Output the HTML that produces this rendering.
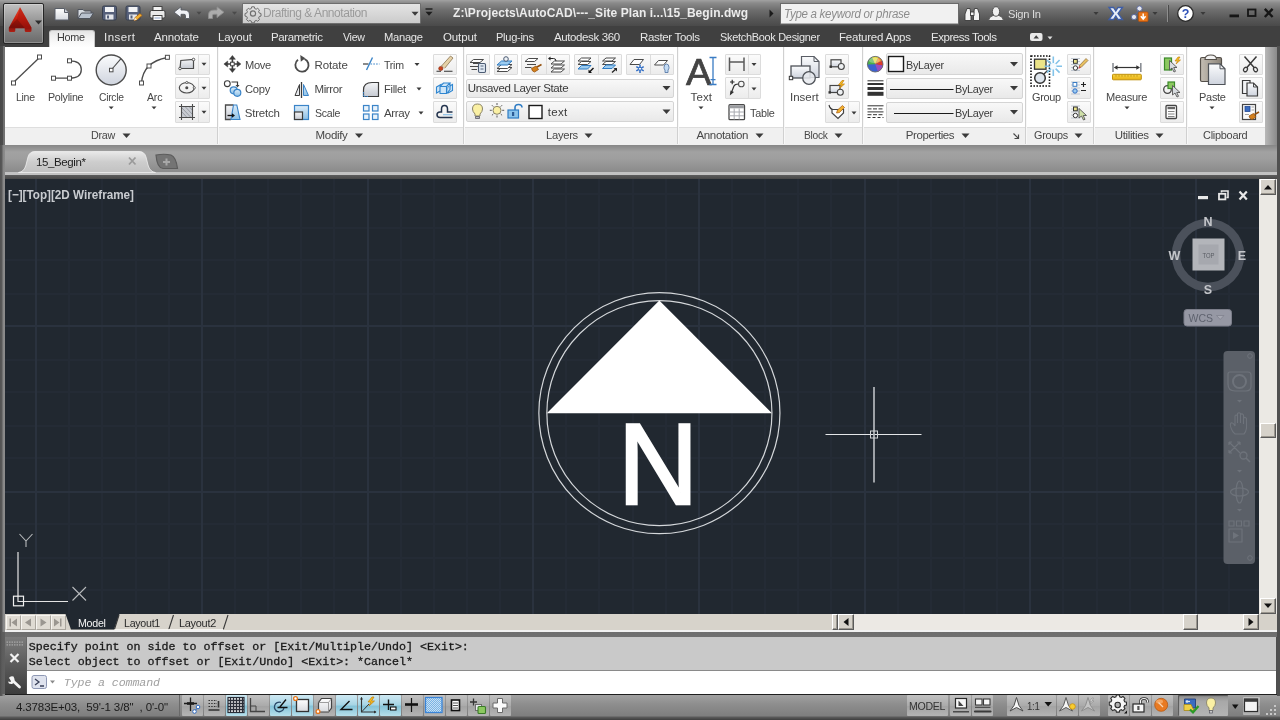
<!DOCTYPE html>
<html>
<head>
<meta charset="utf-8">
<title>AutoCAD</title>
<style>
*{box-sizing:border-box;margin:0;padding:0}
html,body{width:1280px;height:720px;overflow:hidden;background:#4e4e4e;font-family:"Liberation Sans",sans-serif;font-size:11px;color:#3c3c3c}
.a{position:absolute}
svg{position:absolute;overflow:visible}
#titlebar{left:0;top:0;width:1280px;height:27px;background:linear-gradient(#a2a2a2 0,#8a8a8a 3px,#6e6e6e 10px,#555 20px,#484848 27px)}
#tabrow{left:0;top:26px;width:1280px;height:21px;background:#404040}
#ribbon{left:4.5px;top:46.5px;width:1260.5px;height:81.5px;background:#fff}
#ribtitle{left:4.5px;top:127px;width:1260.5px;height:18px;background:#f0f0f0;border-top:1px solid #dedede}
#ribright{left:1265px;top:47px;width:12px;height:98px;background:linear-gradient(90deg,#b8b8b8,#8a8a8a)}
#docbar{left:0;top:145px;width:1280px;height:34px;background:linear-gradient(#868686 0,#a2a2a2 7px,#9e9e9e 14px,#8a8a8a 27px,#c2c2c2 27.5px,#c2c2c2 29.5px,#5a5a5a 30.5px,#484848 34px)}
#lborder{left:0;top:46px;width:5px;height:650px;background:linear-gradient(90deg,#525252 0,#5a5a5a 2px,#868686 3px,#8c8c8c 5px)}
#lborder3{left:0;top:632px;width:5px;height:62px;background:linear-gradient(90deg,#4e4e4e 0,#5c5c5c 2px,#606060 5px)}
#lborder2{left:0;top:46px;width:5px;height:99px;background:linear-gradient(90deg,#484848 0,#4c4c4c 2.5px,#6e6e6e 3px,#727272 5px)}
#rborder{left:1277px;top:46px;width:3px;height:650px;background:#505050}
#canvas{left:5px;top:179px;width:1254px;height:435px;background:#212830;overflow:hidden}
#vscroll{left:1259px;top:179px;width:18px;height:435px;background:#ebe9e4}
#hrow{left:5px;top:614px;width:1272px;height:16px;background:#d7d3cb}
#hscroll{left:837px;top:614px;width:422px;height:16px;background:#ece9e4}
#undertab{left:0;top:630px;width:1280px;height:7px;background:linear-gradient(#f2f2f2 0,#f2f2f2 2px,#6e6e6e 2px,#707070 7px)}
#cmdleft{left:5px;top:637px;width:22px;height:57px;background:#5c5c5c}
#cmdhist{left:27px;top:637px;width:1249px;height:34px;background:#c9c9c9;border-bottom:1px solid #8a8a8a}
#cmdin{left:27px;top:671px;width:1249px;height:23px;background:#fff}
#status{left:0;top:694px;width:1280px;height:26px;background:linear-gradient(#181818 0,#262626 1px,#a0a0a0 1.5px,#8e8e8e 10px,#7e7e7e 22px,#5c5c5c 23px,#3e3e3e 26px)}
.tab{top:30px;height:16px;color:#e4e4e4;font-size:11.5px;line-height:15px;white-space:nowrap}
.lbl{white-space:nowrap;font-size:11.5px;line-height:13px;color:#474747}
.pt{top:129px;height:14px;line-height:13px;font-size:11.5px;color:#474747;white-space:nowrap}
.mono{font-family:"Liberation Mono",monospace;font-size:11.67px;white-space:pre;color:#1c1c1c;line-height:15px}
.sep{top:47px;width:2px;height:97px;background:linear-gradient(90deg,#d0d0d0 0,#d0d0d0 1px,#f8f8f8 1px)}
.sb{height:21px;border:1px solid #dcdcdc;background:linear-gradient(#fbfbfb,#ececec);border-radius:1px}
.sbd{width:1px;background:#dcdcdc}
.dd{border:1px solid #d4d4d4;background:linear-gradient(#f8f8f8,#e9e9e9);border-radius:2px}
.tri{width:0;height:0;border-left:3.5px solid transparent;border-right:3.5px solid transparent;border-top:4px solid #3a3a3a}
.tris{width:0;height:0;border-left:3px solid transparent;border-right:3px solid transparent;border-top:3px solid #3a3a3a}
.stb{top:695px;width:21px;height:21px;background:linear-gradient(#c2c2c2,#ababab 50%,#a2a2a2 51%,#b4b4b4);border-radius:1px}
.stb.on{background:linear-gradient(#cfe9f3,#a9d6e6 45%,#86c4d9 55%,#b7dfea)}
.cb{background:#d6d2ca;border:1px solid;border-color:#fff #5a5a5a #5a5a5a #fff;box-shadow:inset -1px -1px 0 #9a968e}
.tx{white-space:pre;line-height:16px;height:16px}
#root{position:absolute;left:0;top:0;width:1280px;height:720px;will-change:transform;overflow:hidden}
</style>
</head>
<body>
<div id="root">
<div id="titlebar" class="a"></div>
<div id="tabrow" class="a"></div>
<div id="ribbon" class="a"></div>
<div id="ribtitle" class="a"></div>
<div id="ribright" class="a"></div>
<div id="docbar" class="a"></div>
<div id="canvas" class="a">
<svg width="1254" height="435" viewBox="5 179 1254 435" style="left:0;top:0">
<path d="M69 179V614M102 179V614M136 179V614M169 179V614M235 179V614M268 179V614M301 179V614M334 179V614M401 179V614M434 179V614M467 179V614M500 179V614M566 179V614M599 179V614M633 179V614M666 179V614M732 179V614M765 179V614M798 179V614M831 179V614M898 179V614M931 179V614M964 179V614M997 179V614M1063 179V614M1097 179V614M1130 179V614M1163 179V614M1229 179V614M5 194H1259M5 228H1259M5 260H1259M5 294H1259M5 360H1259M5 392H1259M5 426H1259M5 458H1259M5 524H1259M5 558H1259M5 590H1259" stroke="#242b35" stroke-width="2" fill="none"/>
<path d="M36 179V614M202 179V614M368 179V614M533 179V614M699 179V614M865 179V614M1030 179V614M1196 179V614M5 326H1259M5 492H1259" stroke="#2a323e" stroke-width="2" fill="none"/>
<circle cx="659.4" cy="413.1" r="120.55" fill="none" stroke="#d4d7da" stroke-width="1.2"/>
<circle cx="659.4" cy="413.1" r="112.55" fill="none" stroke="#d4d7da" stroke-width="1.2"/>
<path d="M546.8 413.2L659.3 300.6L772 413.2Z" fill="#fff"/>
<text transform="translate(658.1 504.9) scale(1 1.036)" x="0" y="-1.3" font-family="Liberation Sans, sans-serif" font-size="111" fill="#fff" stroke="#fff" stroke-width="2.6" text-anchor="middle">N</text>
<path d="M825.5 434.5H921.5" stroke="#e4e6e8" stroke-width="1.1"/><path d="M874 387V482.5" stroke="#b4b8bc" stroke-width="1.7"/>
<rect x="870.5" y="431" width="7" height="7" fill="none" stroke="#d0d3d6" stroke-width="1"/>
<path d="M18 552V601.5H68" stroke="#e4e4e4" stroke-width="1.2" fill="none"/>
<rect x="13.5" y="596.2" width="10" height="9.6" fill="none" stroke="#f0f0f0" stroke-width="1.2"/>
<path d="M19.5 534L26 541L32.5 534M26 541V547" stroke="#b8babc" stroke-width="1.1" fill="none"/>
<path d="M72.5 587L86 600.5M86 587L72.5 600.5" stroke="#b8babc" stroke-width="1.1" fill="none"/>
<text x="8" y="198.8" font-family="Liberation Sans, sans-serif" font-size="12.5" font-weight="bold" fill="#c9ccd0" textLength="126" lengthAdjust="spacingAndGlyphs">[−][Top][2D Wireframe]</text>
<rect x="1198" y="196" width="10" height="3.2" fill="#e8e8e8"/>
<path d="M1221.5 192.5V191H1228V197.5H1226.5" stroke="#e8e8e8" stroke-width="1.6" fill="none"/>
<rect x="1219" y="193.8" width="6.4" height="5.6" fill="none" stroke="#e8e8e8" stroke-width="1.8"/>
<path d="M1239.5 191.5L1246.8 199.5M1246.8 191.5L1239.5 199.5" stroke="#e8e8e8" stroke-width="2.2" fill="none"/>
<circle cx="1208" cy="255" r="32" fill="none" stroke="#4b515b" stroke-width="8.5"/>
<rect x="1192.5" y="238.5" width="32" height="32" fill="#b3b5ba"/>
<rect x="1198.5" y="244.5" width="20" height="20" fill="#a6a8ae"/>
<text x="1208.5" y="258" font-family="Liberation Sans, sans-serif" font-size="7.5" fill="#5a5d64" text-anchor="middle" textLength="12" lengthAdjust="spacingAndGlyphs">TOP</text>
<text x="1208" y="225.5" font-family="Liberation Sans, sans-serif" font-size="12.5" font-weight="bold" fill="#c4c6ca" text-anchor="middle">N</text>
<text x="1208" y="293.5" font-family="Liberation Sans, sans-serif" font-size="12.5" font-weight="bold" fill="#c4c6ca" text-anchor="middle">S</text>
<text x="1174.5" y="259.5" font-family="Liberation Sans, sans-serif" font-size="12.5" font-weight="bold" fill="#c4c6ca" text-anchor="middle">W</text>
<text x="1242" y="259.5" font-family="Liberation Sans, sans-serif" font-size="12.5" font-weight="bold" fill="#c4c6ca" text-anchor="middle">E</text>
<rect x="1184" y="309.5" width="47.5" height="16.5" rx="3" fill="#9698a4" stroke="#7c7e8a" stroke-width="1"/>
<text x="1188.5" y="321.5" font-family="Liberation Sans, sans-serif" font-size="10.5" fill="#5e626e">WCS</text>
<path d="M1216.5 315.5H1224L1220.2 319.5Z" fill="#a6a8b2" stroke="#80828e" stroke-width="0.8"/>
<rect x="1223.5" y="351" width="31.5" height="213" rx="4" fill="#5b6068"/>
<circle cx="1250" cy="356" r="2.3" fill="none" stroke="#6e737b" stroke-width="1"/>
<circle cx="1250" cy="558" r="2.3" fill="none" stroke="#6e737b" stroke-width="1"/>
<path d="M1230 372H1248Q1251 372 1251 375V386Q1251 391 1246 391H1235Q1228 391 1228 384V374Q1228 372 1230 372Z" fill="none" stroke="#6e737b" stroke-width="1.2"/>
<circle cx="1239.5" cy="381.5" r="6.5" fill="none" stroke="#6e737b" stroke-width="2"/>
<path d="M1237 400H1242L1239.5 402.5Z" fill="#6e737b"/>
<path d="M1233 432Q1229 425 1231 423Q1233 422 1235 426V416Q1236 414 1237.5 416V423V413.5Q1239 412 1240.5 413.5V423V414.5Q1242 413 1243.5 415V424V418Q1245 416.5 1246.5 418.5V428Q1246 432 1244 434H1235Z" fill="none" stroke="#6e737b" stroke-width="1.1"/>
<path d="M1229 442L1240 453M1240 442L1229 453M1229 442H1232M1229 442V445M1240 442H1237M1240 442V445M1229 453H1232M1229 453V450" fill="none" stroke="#6e737b" stroke-width="1.2"/>
<circle cx="1243.5" cy="455.5" r="3.5" fill="none" stroke="#6e737b" stroke-width="1.3"/>
<path d="M1246 458L1250 462" stroke="#6e737b" stroke-width="1.6"/>
<path d="M1237 470H1242L1239.5 472.5Z" fill="#6e737b"/>
<ellipse cx="1239.5" cy="492" rx="9" ry="4" fill="none" stroke="#6e737b" stroke-width="1.2"/>
<ellipse cx="1239.5" cy="492" rx="3.5" ry="11" fill="none" stroke="#6e737b" stroke-width="1.2"/>
<path d="M1237 509H1242L1239.5 511.5Z" fill="#6e737b"/>
<path d="M1229 521H1234V526H1229ZM1236.5 521H1241.5V526H1236.5ZM1244 521H1249V526H1244ZM1229 529H1242V542H1229Z" fill="none" stroke="#6e737b" stroke-width="1.1"/>
<path d="M1233 532V539L1239 535.5Z" fill="#6e737b"/>
</svg>
</div>
<div id="vscroll" class="a"></div>
<div id="hrow" class="a"></div>
<div id="hscroll" class="a"></div>
<div id="undertab" class="a"></div>
<div id="cmdleft" class="a"></div>
<div id="cmdhist" class="a"></div>
<div id="cmdin" class="a"></div>
<div id="status" class="a"></div>
<div id="lborder" class="a"></div>
<div id="lborder2" class="a"></div>
<div id="lborder3" class="a"></div>
<div id="rborder" class="a"></div>
<!-- app button -->
<div class="a" style="left:3px;top:3px;width:41px;height:41px;border:1px solid #262626;border-radius:2px;background:linear-gradient(#c2c2c2 0,#a4a4a4 30%,#848484 65%,#6a6a6a 100%);box-shadow:inset 0 0 0 1px rgba(255,255,255,.25)"></div>
<svg width="1280" height="47" viewBox="0 0 1280 47" style="left:0;top:0">
<defs>
<linearGradient id="gA" x1="0" y1="0" x2="0" y2="1"><stop offset="0" stop-color="#ea4a30"/><stop offset=".45" stop-color="#c8200f"/><stop offset=".8" stop-color="#86100a"/><stop offset="1" stop-color="#b02014"/></linearGradient>
<linearGradient id="gPg" x1="0" y1="0" x2="0" y2="1"><stop offset="0" stop-color="#ffffff"/><stop offset="1" stop-color="#d4d8de"/></linearGradient>
</defs>
<!-- A logo -->
<path d="M20 7.200L8.800 27.800V30.500Q8.800 32 10.300 32H13.800Q15.300 32 15.300 30.500V28.300H24.700V30.500Q24.700 32 26.200 32H30Q31.500 32 31.500 30.500V27.800Z" fill="url(#gA)"/>
<path d="M20 7.200L31.500 27.800L24.700 28.300L17 19Z" fill="#a8140c" opacity=".5"/>
<path d="M8.800 27.800L17 19L24.700 28.300H15.300Z" fill="#6a0c06" opacity=".45"/>
<path d="M35 20.5H42L38.5 24.5Z" fill="#2e2e2e"/>
<!-- new -->
<path d="M55 8.5H64.5L68.5 12.5V20H55Z" fill="url(#gPg)" stroke="#5a5f68" stroke-width="1"/>
<path d="M64.5 8.5V12.5H68.5" fill="#c8ccd4" stroke="#5a5f68" stroke-width="1"/>
<!-- open -->
<path d="M78 18.5V9.5H83L84.5 11H91V13" fill="#d8dce2" stroke="#4e535c" stroke-width="1"/>
<path d="M78 18.5L81.5 13H93.5L90 18.5Z" fill="#b9c2ce" stroke="#4e535c" stroke-width="1"/>
<!-- save -->
<rect x="102.5" y="6" width="14" height="14" rx="1.5" fill="#56607a" stroke="#39404f" stroke-width="1"/>
<rect x="105" y="7" width="9" height="5" fill="#f2f3f5"/>
<rect x="105.5" y="14.5" width="8" height="5" fill="#e4e6ea"/><rect x="107" y="15.5" width="2" height="3" fill="#56607a"/>
<!-- saveas -->
<rect x="126" y="6" width="14" height="14" rx="1.5" fill="#56607a" stroke="#39404f" stroke-width="1"/>
<rect x="128.500" y="7" width="9" height="5" fill="#f2f3f5"/>
<rect x="129" y="14.5" width="8" height="5" fill="#e4e6ea"/><rect x="130.5" y="15.5" width="2" height="3" fill="#56607a"/>
<path d="M134 20.5L135 17.5L140 13.5L142 15.5L137 19.8Z" fill="#f0b030" stroke="#a85a10" stroke-width=".7"/>
<path d="M134 20.5L135 17.5L137 19.8Z" fill="#f6e6c8"/>
<!-- print -->
<rect x="153" y="6.500" width="9" height="5" fill="#f4f4f4" stroke="#444" stroke-width="1"/>
<rect x="150" y="10.500" width="15" height="7.500" rx="1.5" fill="#e9e9e9" stroke="#3e3e3e" stroke-width="1"/>
<rect x="153" y="15.500" width="9" height="5" fill="#fafafa" stroke="#444" stroke-width="1"/>
<path d="M154.500 18H160.500" stroke="#8aa0c8" stroke-width="1"/>
<!-- undo -->
<path d="M174 12.200L181 6.800V10H184Q189.500 10 189.500 15V18.500H185.500V15.500Q185.500 14.300 184 14.300H181V17.600Z" fill="#f0f2f6" stroke="#565a62" stroke-width=".9"/>
<path d="M196.500 11.800H201.500L199 14.800Z" fill="#4a4a4a"/>
<!-- redo -->
<path d="M224 12.200L217 6.800V10H214Q208.500 10 208.500 15V18.500H212.500V15.500Q212.500 14.300 214 14.300H217V17.600Z" fill="#adadad" stroke="#8c8c8c" stroke-width=".9"/>
<path d="M232 11.800H237L234.500 14.800Z" fill="#4a4a4a"/>
</svg>
<!-- workspace combo -->
<div class="a" style="left:242px;top:3px;width:179px;height:21px;border:1px solid #6e6e6e;background:linear-gradient(#e4e4e4,#cbcbcb);border-radius:1px"></div>
<svg width="200" height="27" viewBox="242 0 200 27" style="left:242px;top:0">
<g fill="none" stroke="#6e6e6e" stroke-width="1.2">
<circle cx="253" cy="13.500" r="2.600"/>
<path d="M251.700 6.800h2.600l.4 1.700 1.500.7 1.500-.9 1.800 1.800-.9 1.500.7 1.500 1.700.4v2.600l-1.700.4-.7 1.500.9 1.500-1.800 1.800-1.500-.9-1.500.7-.4 1.700h-2.600l-.4-1.700-1.500-.7-1.500.9-1.800-1.800.9-1.500-.7-1.500-1.700-.4v-2.600l1.700-.4.700-1.500-.9-1.500 1.800-1.800 1.500.9 1.500-.7z" stroke-width="1"/>
</g>
<path d="M411.500 11.800H418.500L415 15.800Z" fill="#3c3c3c"/>
<path d="M425.500 9H432.500" stroke="#1c1c1c" stroke-width="1.400"/>
<path d="M425.500 11.800H432.500L429 15.800Z" fill="#1c1c1c"/>
</svg>
<!-- title right arrow -->
<svg width="520" height="27" viewBox="760 0 520 27" style="left:760px;top:0">
<path d="M769.500 9.500V17.500L773.500 13.500Z" fill="#1a1a1a"/>
<rect x="780.500" y="3.500" width="178" height="20.500" fill="#f1f1f1" stroke="#6a6a6a" stroke-width="1"/>
<!-- binoculars -->
<g fill="#f2f2f2" stroke="#3c3c3c" stroke-width=".9">
<path d="M965 20.500V14L967 8.500H970L971 14V20.500Z"/>
<path d="M973.500 20.500V14L974.500 8.500H977.500L979.500 14V20.500Z"/>
<rect x="970.500" y="12" width="3.500" height="3.500"/>
</g>
<!-- user -->
<g fill="#f0f0f0" stroke="#4a4a4a" stroke-width=".9">
<path d="M988.500 20.500Q989 16.500 993 15.500H999Q1003 16.500 1003.500 20.500Z"/>
<ellipse cx="996" cy="11.500" rx="3.600" ry="4.800"/>
</g>
<path d="M1093.500 12H1098.500L1096 15Z" fill="#3a3a3a"/>
<!-- exchange X -->
<path d="M1109 7.500H1113.500L1115.800 11L1118 7.500H1122.500L1118 13.500L1122.500 19.500H1118L1115.800 16L1113.500 19.500H1109L1113.500 13.500Z" fill="#e8eef8" stroke="#3d5da8" stroke-width="1.300"/>
<!-- a360 -->
<g fill="#e6e8f0" stroke="#5a6aa0" stroke-width=".9">
<circle cx="1139.500" cy="8.500" r="2.600"/><circle cx="1134" cy="17" r="2.600"/>
<path d="M1138.500 10.500L1135 15" />
</g>
<rect x="1138.500" y="12" width="9.500" height="9.500" rx="1" fill="#e8761a" stroke="#b8520c" stroke-width=".8"/>
<path d="M1143.200 13.500V18M1140.800 16.300L1143.200 19L1145.600 16.300" stroke="#fff" stroke-width="1.500" fill="none"/>
<path d="M1152.500 12H1157.500L1155 15Z" fill="#3a3a3a"/>
<path d="M1167.500 5V22" stroke="#8e8e8e" stroke-width="1"/><path d="M1168.500 5V22" stroke="#4a4a4a" stroke-width="1"/>
<!-- help -->
<circle cx="1185.500" cy="13.500" r="7.800" fill="#fff" stroke="#2a2a2a" stroke-width="1.300"/>
<text x="1185.500" y="18" font-family="Liberation Sans, sans-serif" font-size="12.500" font-weight="bold" fill="#2c50b8" text-anchor="middle">?</text>
<path d="M1200.500 12H1205.500L1203 15Z" fill="#3a3a3a"/>
<!-- window controls -->
<rect x="1229.500" y="14.500" width="9.500" height="2.800" fill="#161616"/>
<rect x="1248" y="9.500" width="7.500" height="6.500" fill="none" stroke="#161616" stroke-width="1.800"/>
<path d="M1264.800 8.800L1272.600 17M1272.600 8.800L1264.800 17" stroke="#161616" stroke-width="2.400"/>
</svg>

<div class="a" style="left:49px;top:30px;width:45.500px;height:17px;border-radius:3px 3px 0 0;background:linear-gradient(#e4e4e4 0,#f0f0f0 5px,#fafafa 12px,#fff 17px);border:1px solid #c8c8c8;border-bottom:0"></div>
<svg width="40" height="20" viewBox="1025 26 40 20" style="left:1025px;top:26px">
<rect x="1030" y="33" width="12.500" height="8" rx="2" fill="#e8e8e8"/>
<path d="M1033.500 38.500H1039L1036.200 35.200Z" fill="#404040"/>
<path d="M1047.500 36.500H1052.500L1050 39.500Z" fill="#e0e0e0"/>
</svg>

<div class="a sep" style="left:217px"></div>
<div class="a sep" style="left:462.5px"></div>
<div class="a sep" style="left:676.5px"></div>
<div class="a sep" style="left:782.5px"></div>
<div class="a sep" style="left:862px"></div>
<div class="a sep" style="left:1025px"></div>
<div class="a sep" style="left:1092.5px"></div>
<div class="a sep" style="left:1185.5px"></div>
<div class="a sb" style="left:174.5px;top:53.5px;width:35.5px;height:21.5px"></div>
<div class="a sbd" style="left:197.5px;top:54.5px;height:19.5px"></div>
<div class="a sb" style="left:174.5px;top:77.3px;width:35.5px;height:21.5px"></div>
<div class="a sbd" style="left:197.5px;top:78.3px;height:19.5px"></div>
<div class="a sb" style="left:174.5px;top:101.2px;width:35.5px;height:21.5px"></div>
<div class="a sbd" style="left:197.5px;top:102.2px;height:19.5px"></div>
<div class="a sb" style="left:433px;top:53.5px;width:23.5px;height:21.5px"></div>
<div class="a sb" style="left:433px;top:77.3px;width:23.5px;height:21.5px"></div>
<div class="a sb" style="left:433px;top:101.2px;width:23.5px;height:21.5px"></div>
<div class="a sb" style="left:466px;top:53.5px;width:24.0px;height:21.5px"></div>
<div class="a sb" style="left:493.5px;top:53.5px;width:24.0px;height:21.5px"></div>
<div class="a sb" style="left:521px;top:53.5px;width:48.5px;height:21.5px"></div>
<div class="a sbd" style="left:545.5px;top:54.5px;height:19.5px"></div>
<div class="a sb" style="left:573.5px;top:53.5px;width:48.0px;height:21.5px"></div>
<div class="a sbd" style="left:597.5px;top:54.5px;height:19.5px"></div>
<div class="a sb" style="left:625.5px;top:53.5px;width:48.0px;height:21.5px"></div>
<div class="a sbd" style="left:649.5px;top:54.5px;height:19.5px"></div>
<div class="a dd" style="left:465.5px;top:78.500px;width:208.500px;height:19px"></div>
<div class="a dd" style="left:465.5px;top:100.700px;width:208.500px;height:21px"></div>
<div class="a sb" style="left:724.5px;top:53.5px;width:36.0px;height:21.5px"></div>
<div class="a sbd" style="left:748px;top:54.5px;height:19.5px"></div>
<div class="a sb" style="left:724.5px;top:77.3px;width:36.0px;height:21.5px"></div>
<div class="a sbd" style="left:748px;top:78.3px;height:19.5px"></div>
<div class="a sb" style="left:824.5px;top:53.5px;width:24.0px;height:21.5px"></div>
<div class="a sb" style="left:824.5px;top:77.3px;width:24.0px;height:21.5px"></div>
<div class="a sb" style="left:824.5px;top:101.2px;width:35.5px;height:21.5px"></div>
<div class="a sbd" style="left:848px;top:102.2px;height:19.5px"></div>
<div class="a dd" style="left:886px;top:53.300px;width:137px;height:21.500px"></div>
<div class="a dd" style="left:886px;top:77.600px;width:137px;height:21.300px"></div>
<div class="a dd" style="left:886px;top:101.500px;width:137px;height:21px"></div>
<div class="a sb" style="left:1067px;top:53.5px;width:23.5px;height:21.5px"></div>
<div class="a sb" style="left:1067px;top:77.3px;width:23.5px;height:21.5px"></div>
<div class="a sb" style="left:1067px;top:101.2px;width:23.5px;height:21.5px"></div>
<div class="a sb" style="left:1159.5px;top:53.5px;width:24.0px;height:21.5px"></div>
<div class="a sb" style="left:1159.5px;top:77.3px;width:24.0px;height:21.5px"></div>
<div class="a sb" style="left:1159.5px;top:101.2px;width:24.0px;height:21.5px"></div>
<div class="a sb" style="left:1238.5px;top:53.5px;width:24.0px;height:21.5px"></div>
<div class="a sb" style="left:1238.5px;top:77.3px;width:24.0px;height:21.5px"></div>
<div class="a sb" style="left:1238.5px;top:101.2px;width:24.0px;height:21.5px"></div><svg width="1272" height="100" viewBox="5 47 1272 100" style="left:5px;top:47px">
<defs>
<linearGradient id="gC" x1="0" y1="0" x2="0" y2="1"><stop offset="0" stop-color="#fbfcfd"/><stop offset="1" stop-color="#cfd4de"/></linearGradient>
<linearGradient id="gB" x1="0" y1="0" x2="0" y2="1"><stop offset="0" stop-color="#dfeefa"/><stop offset="1" stop-color="#8cc0e6"/></linearGradient>
<linearGradient id="gG" x1="0" y1="0" x2="0" y2="1"><stop offset="0" stop-color="#f4f5f7"/><stop offset="1" stop-color="#c6cad2"/></linearGradient>
</defs>
<g id="draw" fill="none" stroke="#4c4c4c" stroke-width="1.300">
<!-- line -->
<path d="M14.500 81.500L38.500 58.500"/>
<rect x="11.500" y="81" width="4" height="4" fill="#fff" stroke-width="1"/><rect x="37.500" y="55" width="4" height="4" fill="#fff" stroke-width="1"/>
<!-- polyline -->
<path d="M53.500 78.200H69.500Q81.300 78.200 81.300 69.500Q81.300 60.800 69.500 60.800"/>
<rect x="51.500" y="76.200" width="4" height="4" fill="#fff" stroke-width="1"/><rect x="67.500" y="76.200" width="4" height="4" fill="#fff" stroke-width="1"/><rect x="67.500" y="58.800" width="4" height="4" fill="#fff" stroke-width="1"/>
<!-- circle -->
<circle cx="111.200" cy="70" r="15" fill="url(#gC)" stroke-width="1.400"/>
<path d="M111.200 70L121 58.700" stroke-width="1.100"/>
<rect x="109.500" y="68.300" width="3.500" height="3.500" fill="#fff" stroke-width="1"/>
<!-- arc -->
<path d="M141.500 83Q143 62 167.400 57.500"/>
<rect x="139.500" y="81" width="4" height="4" fill="#fff" stroke-width="1"/><rect x="147" y="64" width="4" height="4" fill="#fff" stroke-width="1"/><rect x="165.400" y="55.300" width="4" height="4" fill="#fff" stroke-width="1"/>
<!-- rectangle -->
<path d="M180 68.500L180.800 60.500L193.500 59.500V68.500Z" fill="url(#gG)" stroke-width="1.200"/>
<circle cx="180" cy="68.500" r="1.300" fill="#fff" stroke-width=".9"/><circle cx="193.500" cy="59.500" r="1.300" fill="#fff" stroke-width=".9"/>
<!-- ellipse -->
<ellipse cx="186.800" cy="87.800" rx="7.500" ry="5.200" stroke-width="1.200"/>
<circle cx="186.800" cy="87.800" r=".9" fill="#4c4c4c"/><circle cx="186.800" cy="82.500" r="1.100" fill="#fff" stroke-width=".8"/><circle cx="194.300" cy="87.800" r="1.100" fill="#fff" stroke-width=".8"/>
<!-- hatch -->
<rect x="181.500" y="106.500" width="11" height="11" fill="#c9ccd2" stroke="none"/>
<path d="M182 108L191 117.500M185 106.500L193 115M182 112L187 117.500M189 106.500L193 111" stroke="#8a8e96" stroke-width=".8"/>
<path d="M179 106.500H195M179 117.500H195M181.500 104V120M192.500 104V120" stroke-width="1.100"/>
</g>
<g fill="#3a3a3a">
<path d="M201.500 62.800H206.500L204 65.800Z"/><path d="M201.500 86.800H206.500L204 89.800Z"/><path d="M201.500 110.800H206.500L204 113.800Z"/>
<path d="M108.700 106.500H113.700L111.200 109.300Z"/><path d="M151.500 106.500H156.500L154 109.300Z"/>
<path d="M122.500 133.500H130.500L126.500 138Z"/><path d="M355 133.500H363L359 138Z"/><path d="M584.500 133.500H592.500L588.500 138Z"/><path d="M755.500 133.500H763.500L759.500 138Z"/><path d="M834.500 133.500H842.500L838.500 138Z"/><path d="M961.500 133.500H969.500L965.500 138Z"/><path d="M1074.500 133.500H1082.500L1078.500 138Z"/><path d="M1155.500 133.500H1163.500L1159.500 138Z"/>
<path d="M414.500 63H419.500L417 66Z"/><path d="M416.500 87.500H421.500L419 90.500Z"/><path d="M418.500 111.500H423.500L421 114.500Z"/>
<path d="M698.500 106.500H703.500L701 109.300Z"/><path d="M1124.500 106.500H1129.500L1127 109.300Z"/><path d="M1209.500 106.500H1214.500L1212 109.300Z"/>
<path d="M751.500 63H756.500L754 66Z"/><path d="M751.500 87.500H756.500L754 90.500Z"/><path d="M851.500 111.500H856.500L854 114.500Z"/>
<path d="M662.500 86H670.500L666.500 90.500Z"/><path d="M662.500 109.500H670.500L666.500 114Z"/>
<path d="M1010 62H1018L1014 66.500Z"/><path d="M1010 86H1018L1014 90.500Z"/><path d="M1010 110H1018L1014 114.500Z"/>
</g>
<path d="M1013.500 133.500L1018.500 138.500M1018.500 134.500V138.500H1014.500" stroke="#4a4a4a" stroke-width="1.200" fill="none"/>
<g id="modify" fill="none" stroke="#3c3c3c" stroke-width="1.200">
<!-- move -->
<path d="M232.400 58V70M226.400 64H238.400" stroke-width="1.600"/>
<path d="M229.400 59.300L232.400 55.500L235.400 59.300ZM229.400 68.700L232.400 72.500L235.400 68.700ZM227.700 61L223.900 64L227.700 67ZM237.100 61L240.900 64L237.100 67Z" fill="#3c3c3c" stroke-width=".5"/>
<rect x="230.600" y="62.200" width="3.600" height="3.600" fill="#fff" stroke-width="1"/>
<!-- copy -->
<circle cx="227.300" cy="83.700" r="2.900" stroke-width="1.100"/>
<path d="M231.500 82H237.500V85.500" stroke-width="1.200"/><path d="M235.500 85L237.500 87.500L239.500 85Z" fill="#3c3c3c" stroke="none"/>
<circle cx="233.700" cy="90.300" r="3.500" fill="url(#gB)" stroke="#3a84c8" stroke-width="1.200"/>
<circle cx="237.300" cy="92.800" r="3.500" fill="url(#gB)" stroke="#3a84c8" stroke-width="1.200"/>
<!-- stretch -->
<path d="M233.500 105H225.500V119.500H231" fill="url(#gG)" stroke="#4a4a4a" stroke-width="1.300"/>
<path d="M233.500 105H236.800L240 119.500H231Z" fill="url(#gB)" stroke="#3a84c8" stroke-width="1.100"/>
<path d="M227.500 115.500H232.500" stroke="#111" stroke-width="1.300"/><path d="M232 113.300L235 115.500L232 117.700Z" fill="#111" stroke="none"/>
<!-- rotate -->
<path d="M304.500 59A6.600 6.600 0 1 1 298 59.800" stroke-width="1.800" stroke="#4a4a4a"/>
<path d="M300.300 55L305.300 58.300L300.800 61.800Z" fill="#4a4a4a" stroke="none"/>
<!-- mirror -->
<path d="M301.500 82V98" stroke-width="1.300"/>
<path d="M299.500 84.500L295 95.500H299.500Z" fill="#e8eaee" stroke-width="1"/>
<path d="M303.500 84.500L308.500 95.500H303.500Z" fill="url(#gB)" stroke="#3a84c8" stroke-width="1"/>
<!-- scale -->
<rect x="294.500" y="105.500" width="14" height="14" fill="url(#gB)" stroke="#3a84c8" stroke-width="1.200"/>
<rect x="294.500" y="112" width="8" height="7.500" fill="url(#gG)" stroke="#3c3c3c" stroke-width="1.200"/>
<!-- trim -->
<path d="M363 64H368.500" stroke-width="1.200"/><path d="M370.500 64H379.500" stroke="#3a84c8" stroke-width="1.100" stroke-dasharray="1.600 1.200"/>
<path d="M366.500 70L372.500 57.500" stroke="#3a84c8" stroke-width="1.400"/>
<!-- fillet -->
<path d="M363.500 96.500V90Q363.500 82.500 372 82.500H378.500V96.500Z" fill="url(#gG)" stroke-width="1.200"/>
<path d="M363.500 92V96.500H368" stroke="#3a84c8" stroke-width="1.100" stroke-dasharray="1.500 1"/>
<!-- array -->
<g stroke="#3a84c8" fill="#eaf3fb" stroke-width="1.200"><rect x="363.500" y="105.500" width="5.500" height="5.500"/><rect x="372.500" y="105.500" width="5.500" height="5.500"/><rect x="363.500" y="114" width="5.500" height="5.500"/><rect x="372.500" y="114" width="5.500" height="5.500"/></g>
<!-- erase -->
<path d="M436.500 71.300H441M444 71.300H452.500" stroke="#333" stroke-width="1.100"/>
<path d="M441.500 66L450.500 56L453 58L444.500 68.500Z" fill="#e6d2a8" stroke="#8a7450" stroke-width=".8"/>
<path d="M441 66.500L444.500 69" stroke="#f4f4f4" stroke-width="1.400"/>
<circle cx="440.800" cy="68.500" r="2.100" fill="#c8441c" stroke="#8a2a10" stroke-width=".6"/>
<!-- explode -->
<g stroke="#2f86d0" stroke-width="1.100" fill="#cfe6f8"><path d="M436.500 87L441 84.500V90.500L436.500 93Z"/><path d="M448 87L452.500 84.500V90.500L448 93Z"/><path d="M440 86.500H446.500V93.500H440ZM440 86.500L443.500 83H450L446.500 86.500M450 83V89.500L446.500 93.500"/></g>
<!-- offset -->
<path d="M452.500 112H447.500V109Q447.500 105.500 444.500 105.500Q441.500 105.500 441.500 109V112H440Q437 112 437 114.800Q437 117.500 440 117.500H452.500" stroke="#24344e" stroke-width="1.500"/>
<path d="M452.500 114.700H443" stroke="#8cc0e6" stroke-width="1.200"/>
</g>
</svg>
<svg width="1272" height="100" viewBox="5 47 1272 100" style="left:5px;top:47px">
<g id="layers" fill="none" stroke="#4a4a4a" stroke-width="1">
<!-- btn1 layer properties -->
<path d="M473.500 59.500H483.500L480 62.500H470Z" fill="#fff"/><path d="M473 63.500H479.500M470 66.500H478M471.500 69.500H477" />
<rect x="478.500" y="63.500" width="7" height="9" rx="1.200" fill="#dfe8f2" stroke="#4a5a72" stroke-width="1.100"/><path d="M480.500 66H483.500M480.500 69H483.500" stroke="#4a5a72" stroke-width=".9"/>
<!-- btn2 -->
<path d="M501.500 67.500H512L507.500 71.500H497Z" fill="#fff"/>
<path d="M501.500 64.500H512L507.500 68.500H497Z" fill="#fff"/>
<path d="M501.500 61H512L507.500 65H497Z" fill="#9cccf0" stroke="#2f7cc4"/>
<circle cx="506" cy="59" r="2.300" fill="#eef2f6" stroke="#4a5a72"/>
<!-- btn3 -->
<path d="M528.500 58.500H538L534.500 61.500H525Z" fill="#fff"/><path d="M527 64.500H536M525 67.500H531.500"/>
<path d="M531.500 68.500L536 66L538.500 69.500L534.500 72Q532 71.500 531.500 68.500Z" fill="#d4801c" stroke="#94500c" stroke-width=".8"/><path d="M537 67L541.500 64.500" stroke="#94500c" stroke-width="1.600"/>
<!-- btn4 -->
<path d="M554.500 61H564.500L561 64H551Z" fill="#fff"/><path d="M554.500 65H564.500L561 68H551ZM554.500 69H564.500L561 72H551Z" fill="#fff"/>
<path d="M549 58.500H553.500Q556 58.500 556 61" stroke="#222" stroke-width="1"/><path d="M550.500 56.500L548 58.500L550.500 60.500Z" fill="#222" stroke="none"/>
<!-- btn5 -->
<path d="M581.500 58H591L587.500 61H578Z" fill="#fff"/><path d="M581.500 61.500H591L587.500 64.500H578Z" fill="#fff"/><path d="M581.500 65.500H591L587.500 69H578Z" fill="#9cccf0" stroke="#2f7cc4"/>
<path d="M593.500 68L589.500 72" stroke="#111" stroke-width="1.400"/><path d="M588.500 69.500V73H592Z" fill="#111" stroke="none"/>
<!-- btn6 -->
<path d="M606 58H615.500L612 61H602.500Z" fill="#fff"/><path d="M606 61.500H615.500L612 64.500H602.500Z" fill="#fff"/><path d="M606 65H615.500L612 68.500H602.500Z" fill="#9cccf0" stroke="#2f7cc4"/>
<path d="M612 72.500L616.500 68.500" stroke="#222" stroke-width="1.400"/><path d="M613.500 68H617V71.500Z" fill="#222" stroke="none"/>
<!-- btn7 -->
<path d="M634 59.500H643.500L639.500 64.500H630Z" fill="#fff"/>
<path d="M640 64.500V73M636.300 66.600L643.700 70.900M643.700 66.600L636.300 70.900" stroke="#2f6cc4" stroke-width="1.500"/><circle cx="640" cy="68.800" r="1.500" fill="#fff" stroke="#2f6cc4" stroke-width=".9"/>
<!-- btn8 -->
<path d="M658.500 60.500H667.500L663.500 65H654.500Z" fill="#fff"/>
<path d="M664 67.500Q664 64 666.500 64Q669 64 669 67.500Q669 69 668 70V72.500H665V70Q664 69 664 67.500Z" fill="#c4dcf4" stroke="#5a7aa8" stroke-width=".9"/>
<!-- bulb -->
<path d="M472.500 109Q472.500 104 477.500 104Q482.500 104 482.500 109Q482.500 111.500 480 114V116H475V114Q472.500 111.500 472.500 109Z" fill="#faf0a4" stroke="#8a8468" stroke-width="1"/>
<path d="M475.500 116.500H479.500V118.500H475.500Z" fill="#b8b8c0" stroke="#5a5a64" stroke-width=".8"/>
<!-- sun -->
<circle cx="497" cy="110.300" r="4" fill="#faf0a4" stroke="#8a8468" stroke-width="1"/>
<path d="M497 103V105M497 115.500V117.500M489.800 110.300H491.800M502.200 110.300H504.200M491.900 105.200L493.300 106.600M500.700 114L502.100 115.400M502.100 105.200L500.700 106.600M493.300 114L491.900 115.400" stroke="#5a5a5a" stroke-width="1"/>
<!-- lock -->
<path d="M515 110V107.500Q515 104.500 518.500 104.500Q522 104.500 522 107.500" stroke="#2f7cc4" stroke-width="1.600"/>
<rect x="508" y="110" width="10.500" height="8" fill="#8cc4ec" stroke="#2f7cc4" stroke-width="1.200"/><rect x="512" y="112" width="2.200" height="4" fill="#2c5a94" stroke="none"/>
<!-- swatch -->
<rect x="529" y="105.500" width="13" height="13" fill="#fff" stroke="#1a1a1a" stroke-width="1.400"/>
</g>
</svg>
<svg width="1272" height="100" viewBox="5 47 1272 100" style="left:5px;top:47px">
<defs>
<linearGradient id="gClip" x1="0" y1="0" x2="1" y2="0"><stop offset="0" stop-color="#c4beb4"/><stop offset="1" stop-color="#8c857a"/></linearGradient>
<linearGradient id="gY" x1="0" y1="0" x2="0" y2="1"><stop offset="0" stop-color="#f8d648"/><stop offset="1" stop-color="#e8b010"/></linearGradient>
<clipPath id="cw"><circle cx="875.200" cy="64.200" r="7.800"/></clipPath>
</defs>
<!-- big A -->
<text x="686" y="84.700" font-family="Liberation Sans, sans-serif" font-size="37.500" fill="#444" stroke="#444" stroke-width=".7" textLength="25.500" lengthAdjust="spacingAndGlyphs">A</text>
<path d="M713 57.500V84.500M709.500 57.500H716.500M709.500 84.500H716.500M710.500 79.700H715.500" stroke="#3a7cc4" stroke-width="1.300" fill="none"/>
<g fill="none" stroke="#505050" stroke-width="1.300">
<!-- dim -->
<path d="M729.500 57.500V71M744 57.500V71M729.500 62H744" stroke="#5a5a5a" stroke-width="1.500"/>
<!-- leader -->
<path d="M731 93.500L734 86Q735 84 738.500 84" stroke="#333" stroke-width="1.200"/><path d="M729.800 95.500L730.500 90.500L734 92Z" fill="#333" stroke="none"/>
<circle cx="741.300" cy="84" r="2.800" stroke-width="1.100"/>
<path d="M730 82H734.500M732.200 79.800V84.200" stroke="#222" stroke-width="1.100"/>
<!-- table -->
<rect x="729" y="104.700" width="15.500" height="15" rx="1" fill="#fff" stroke="#4a4a4a" stroke-width="1.300"/>
<rect x="729.600" y="105.300" width="14.300" height="3" fill="#9a9ca0" stroke="none"/>
<path d="M729.500 112H744M729.500 115.800H744M734.200 108.500V119.500M739.200 108.500V119.500" stroke="#a8aab0" stroke-width="1"/>
<!-- insert big -->
<path d="M801.500 56.500H814L819 61.500V77.500H801.500Z" fill="url(#gC)" stroke="#5a5e66" stroke-width="1.200"/>
<path d="M814 56.500V61.500H819" stroke="#5a5e66" stroke-width="1"/>
<rect x="791" y="66" width="19" height="12" fill="url(#gC)" stroke="#4e5258" stroke-width="1.300"/>
<circle cx="809" cy="78" r="6.300" fill="#e8eaee" fill-opacity=".85" stroke="#4e5258" stroke-width="1.300"/>
<rect x="789.300" y="76.300" width="3.400" height="3.400" fill="#fff" stroke="#333" stroke-width="1"/>
<!-- block btn1 -->
<rect x="831" y="59.800" width="10" height="7" fill="url(#gC)" stroke="#444" stroke-width="1.200"/><circle cx="841.300" cy="66.500" r="3" fill="#eef0f2" stroke="#444" stroke-width="1.100"/><rect x="829.500" y="65.500" width="2.400" height="2.400" fill="#333" stroke="none"/>
<!-- block btn2 -->
<rect x="830" y="85.500" width="10" height="7" fill="url(#gC)" stroke="#444" stroke-width="1.200"/><circle cx="840.300" cy="92.200" r="3" fill="#eef0f2" stroke="#444" stroke-width="1.100"/><rect x="828.500" y="91.200" width="2.400" height="2.400" fill="#333" stroke="none"/>
<path d="M842 80.500L838.500 85H841.500L839.500 88.500L844.500 84H841.500L844 80.500Z" fill="#f8c020" stroke="#c07808" stroke-width=".7"/>
<!-- block btn3 -->
<path d="M829 105Q830 109 833 109.500" stroke="#333" stroke-width="1.100"/>
<path d="M832 109.500H843.500V113L838 118.500L832 113Z" fill="#fff" stroke="#444" stroke-width="1.200"/>
<path d="M836.500 113L837.500 110L842.500 105.500L844.500 107.500L839.500 112.500Z" fill="#f0b030" stroke="#a85a10" stroke-width=".7"/>
</g>
<!-- color wheel -->
<g clip-path="url(#cw)">
<circle cx="875.2" cy="64.2" r="9" fill="#3a62d0"/><path d="M875.2 64.2L863.2 64.6L865.0 57.9L870.1 53.3Z" fill="#4cb048"/><path d="M875.2 64.2L870.1 53.3L875.2 52.2L880.3 53.3Z" fill="#e4dc38"/><path d="M875.2 64.2L880.3 53.3L883.7 55.7L886.1 59.1Z" fill="#f09028"/><path d="M875.2 64.2L886.1 59.1L887.1 62.8L886.9 66.7Z" fill="#e03a2a"/><path d="M875.2 64.2L886.9 66.7L884.3 72.1L879.3 75.5Z" fill="#9a4cc0"/><ellipse cx="874.2" cy="60.2" rx="5.500" ry="2.800" fill="#fff" opacity=".3"/>
</g>
<circle cx="875.200" cy="64.200" r="7.800" fill="none" stroke="#6a6a6a" stroke-width=".9"/>
<!-- swatch -->
<rect x="888.500" y="56.500" width="15" height="15" fill="#fff" stroke="#1a1a1a" stroke-width="1.400"/>
<!-- lineweight -->
<path d="M867.500 80.800H883.500" stroke="#333" stroke-width="1"/><path d="M867.500 84H883.500" stroke="#333" stroke-width="2"/><path d="M867.500 88.500H883.500" stroke="#333" stroke-width="3"/><path d="M867.500 93.800H883.500" stroke="#333" stroke-width="4"/>
<path d="M890 89.500H953.500M894 113.500H953.500" stroke="#1a1a1a" stroke-width="1.200"/>
<!-- linetype -->
<path d="M867.500 105.800H883.500M867.500 111.900H883.500" stroke="#333" stroke-width="1"/>
<path d="M867.500 108.900H883.500M867.500 114.700H883.500" stroke="#333" stroke-width="1" stroke-dasharray="4 1.500"/><path d="M867.500 117.500H883.500" stroke="#333" stroke-width="1" stroke-dasharray="3 2"/>
<!-- group -->
<rect x="1031" y="56" width="18.500" height="30" fill="none" stroke="#111" stroke-width="1.600" stroke-dasharray="1.600 1.400"/>
<rect x="1034.500" y="59.200" width="11.500" height="10" fill="#ece488" stroke="#333" stroke-width="1.300"/>
<circle cx="1040" cy="78" r="5.300" fill="#dfe6ee" stroke="#333" stroke-width="1.500"/>
<path d="M1044 74L1047.500 70.500" stroke="#333" stroke-width="1.300"/>
<g stroke="#7cc0e8" stroke-width="1.600" opacity=".95"><path d="M1053.300 56.500V76M1044.500 66.300H1062M1047 60L1059.600 72.600M1059.600 60L1047 72.600"/></g>
<circle cx="1053.300" cy="66.300" r="3.200" fill="#f4fbff"/>
<!-- groups small btns -->
<g fill="none" stroke="#333" stroke-width="1">
<path d="M1071 58.500H1080M1071 61.500H1080M1071 64.500H1080M1071 67.500H1080M1071 70.500H1080" stroke="#b4bcc8" stroke-width=".8"/>
<rect x="1073.500" y="59.500" width="3.800" height="3.800" fill="#ece488"/><circle cx="1075.400" cy="68" r="2.200" fill="#fff"/>
<path d="M1079 66L1086 58.500L1088 60.500L1081 67.500Z" fill="#e8c060" stroke="#8a6a3a" stroke-width=".7"/><path d="M1079 66L1081 67.500L1078.500 69Z" fill="#d04848" stroke="none"/>
<path d="M1071 82H1080M1071 85H1080M1071 88H1080M1071 91H1080M1071 94H1080" stroke="#b4bcc8" stroke-width=".8"/>
<rect x="1073" y="82.500" width="3.800" height="3.800" fill="#fff" stroke="#3a7cc4"/><circle cx="1075" cy="91" r="2.200" fill="#9cccf0" stroke="#2f6cc4"/>
<path d="M1081 84.500H1086M1083.500 82V87M1081 90.500H1086" stroke="#222" stroke-width="1.100"/>
<path d="M1071 106H1080M1071 109H1080M1071 112H1080M1071 115H1080M1071 118H1080" stroke="#b4bcc8" stroke-width=".8"/>
<rect x="1073.500" y="107" width="3.800" height="3.800" fill="#ece488"/><circle cx="1075.400" cy="115.500" r="2.200" fill="#fff"/>
<path d="M1079 108.500V118L1081.500 116L1083.500 120L1085 119.300L1083.200 115.500H1086.500Z" fill="#cfe0a8" stroke="#555" stroke-width=".9"/>
</g>
<!-- measure -->
<path d="M1113 63V72M1140.800 63V72" stroke="#8a8e94" stroke-width="1.600"/>
<path d="M1115 67.500H1139" stroke="#333" stroke-width="1.200"/><path d="M1113.800 67.500L1117.500 65.300V69.700ZM1140 67.500L1136.300 65.300V69.700Z" fill="#333"/>
<rect x="1112.500" y="74.300" width="28.800" height="5.500" rx=".8" fill="url(#gY)" stroke="#c0900c" stroke-width="1"/>
<path d="M1116 74.800V76.800M1119 74.800V76.800M1122 74.800V76.800M1125 74.800V76.800M1128 74.800V76.800M1131 74.800V76.800M1134 74.800V76.800M1137 74.800V76.800" stroke="#b88a08" stroke-width=".7"/>
<!-- utilities btns -->
<g fill="none" stroke="#333" stroke-width="1">
<rect x="1164.500" y="58" width="7" height="12" fill="#8cc860" stroke="#3a8a28" stroke-width="1.200"/>
<path d="M1169.500 60.500V70L1172 68L1174 72L1175.500 71.300L1173.700 67.500H1177Z" fill="#d8dce0" stroke="#555" stroke-width=".9"/>
<path d="M1178 57L1175 61H1177.500L1176 64L1180.500 60H1178L1180 57Z" fill="#f8c020" stroke="#c07808" stroke-width=".6"/>
<circle cx="1167.500" cy="89.500" r="3.800" stroke="#444" stroke-width="1.300"/>
<rect x="1168" y="82" width="6.500" height="6.500" fill="#8cc860" stroke="#3a8a28" stroke-width="1.200"/>
<path d="M1172.500 85.500V95L1175 93L1177 97L1178.500 96.300L1176.700 92.500H1180Z" fill="#d8dce0" stroke="#555" stroke-width=".9"/>
<rect x="1166" y="105.500" width="10.500" height="13" rx="1" fill="#fff" stroke="#444" stroke-width="1.300"/>
<rect x="1167.500" y="107" width="7.500" height="2.200" fill="#666" stroke="none"/>
<path d="M1168 111.500H1174.500M1168 114H1174.500M1168 116.500H1174.500" stroke="#777" stroke-width=".9"/>
</g>
<!-- paste -->
<rect x="1200.500" y="57.500" width="21" height="24" rx="1.500" fill="url(#gClip)" stroke="#55504a" stroke-width="1.200"/>
<path d="M1205 59.500Q1205 55 1210.800 55Q1216.500 55 1216.500 59.500Z" fill="#f4f4f4" stroke="#55504a" stroke-width="1.100"/>
<path d="M1208.500 63.800H1220L1225 68.800V84.500H1208.500Z" fill="url(#gC)" stroke="#4e5258" stroke-width="1.200"/>
<path d="M1220 63.800V68.800H1225" fill="none" stroke="#4e5258" stroke-width="1"/>
<!-- clipboard btns -->
<g fill="none" stroke="#3a3a3a" stroke-width="1.200">
<path d="M1244.500 56.500L1254.500 68M1256.500 56.500L1246.500 68" stroke-width="1.500"/>
<ellipse cx="1245.500" cy="69.500" rx="1.800" ry="2.300" transform="rotate(35 1245.500 69.500)"/><ellipse cx="1255.500" cy="69.500" rx="1.800" ry="2.300" transform="rotate(-35 1255.500 69.500)"/>
<path d="M1242.500 80.500H1250V93.500H1242.500Z" fill="#f2f3f5"/>
<path d="M1247 83H1253.500L1257.500 87V96H1247Z" fill="url(#gC)"/><path d="M1253.500 83V87H1257.500" stroke-width=".9"/>
<rect x="1242.500" y="104.500" width="13" height="15" fill="#fbfbfb" stroke="#444"/>
<rect x="1245" y="106.500" width="5" height="5" fill="#3a6cc0" stroke="#244a94" stroke-width=".8"/>
<path d="M1251.500 107H1254M1251.500 110H1254M1245 114.500H1249" stroke="#999" stroke-width=".9"/>
<path d="M1249 116L1253.500 113.500L1256 117L1252 119.500Q1249.500 119 1249 116Z" fill="#d4801c" stroke="#94500c" stroke-width=".8"/><path d="M1254.500 114.500L1259 112" stroke="#94500c" stroke-width="1.600"/>
</g>
</svg>

<svg width="200" height="34" viewBox="0 145 200 34" style="left:0;top:145px">
<defs><linearGradient id="gTab" x1="0" y1="0" x2="0" y2="1"><stop offset="0" stop-color="#e9e9e9"/><stop offset=".5" stop-color="#cdcdcd"/><stop offset="1" stop-color="#c2c2c2"/></linearGradient></defs>
<path d="M18.500 172.500Q24 172 26 165L28 157Q29.500 151.500 35 151.500H139Q144.500 151.500 146 157L148 165Q150 172 155.500 172.500Z" fill="url(#gTab)" stroke="#f0f0f0" stroke-width=".8"/>
<path d="M129 157.500L135.500 164.500M135.500 157.500L129 164.500" stroke="#9a9a9a" stroke-width="1.800"/>
<path d="M156 155Q164 153.500 171 155Q176 157 177.500 168.500H163Q157 168 156 155Z" fill="#747474" stroke="#5c5c5c" stroke-width="1.200"/>
<path d="M166.500 158.500V165.500M163 162H170" stroke="#a8a8a8" stroke-width="2"/>
</svg>

<div class="a" style="left:6px;top:615px;width:14.5px;height:14.5px;background:#dfdbd3;border:1px solid;border-color:#f6f4f0 #aaa69e #aaa69e #f6f4f0"></div>
<div class="a" style="left:21px;top:615px;width:14.5px;height:14.5px;background:#dfdbd3;border:1px solid;border-color:#f6f4f0 #aaa69e #aaa69e #f6f4f0"></div>
<div class="a" style="left:36px;top:615px;width:14.5px;height:14.5px;background:#dfdbd3;border:1px solid;border-color:#f6f4f0 #aaa69e #aaa69e #f6f4f0"></div>
<div class="a" style="left:51px;top:615px;width:14.5px;height:14.5px;background:#dfdbd3;border:1px solid;border-color:#f6f4f0 #aaa69e #aaa69e #f6f4f0"></div>
<div class="a cb" style="left:832px;top:614px;width:6px;height:16px"></div>
<div class="a cb" style="left:838px;top:614px;width:16px;height:16px"></div>
<div class="a cb" style="left:1243px;top:614px;width:16px;height:16px"></div>
<div class="a cb" style="left:1183px;top:614px;width:15px;height:16px"></div>
<div class="a" style="left:1259px;top:614px;width:18px;height:16px;background:#d6d2ca"></div>
<div class="a cb" style="left:1260px;top:179px;width:16px;height:16px"></div>
<div class="a cb" style="left:1260px;top:598px;width:16px;height:16px"></div>
<div class="a cb" style="left:1260px;top:422.500px;width:16px;height:15px"></div>
<svg width="1280" height="110" viewBox="0 610 1280 110" style="left:0;top:610px">
<defs><linearGradient id="gCL" x1="0" y1="0" x2="0" y2="1"><stop offset="0" stop-color="#7c7c7c"/><stop offset=".5" stop-color="#5a5a5a"/><stop offset="1" stop-color="#3c3c3c"/></linearGradient></defs>
<g fill="#9a9690" stroke="none"><path d="M9.500 618.500H11V626.500H9.500ZM17 618.500V626.500L11.500 622.500Z"/><path d="M31 618.500V626.500L25 622.500Z"/><path d="M40.500 618.500V626.500L46.500 622.500Z"/><path d="M61.500 618.500H60V626.500H61.500ZM54 618.500V626.500L59.500 622.500Z"/></g>
<path d="M65.500 614H119.500L114 629.500H71Z" fill="#212830"/>
<path d="M173.500 615L168.800 629.500M228 615L223.300 629.500M119 615L114.400 629.500" stroke="#3a3a3a" stroke-width="1.100" fill="none"/>
<path d="M114.400 629.500H168.800M168.800 629.500H223.300" stroke="#f4f2ee" stroke-width="1" fill="none"/>
<g fill="#111"><path d="M848.500 618V626L843.500 622Z"/><path d="M1248.500 618V626L1253.500 622Z"/><path d="M1264 608.500H1272L1268 604Z" transform="rotate(180 1268 606)"/></g>
<rect x="5" y="637" width="21.500" height="57" fill="url(#gCL)"/>
<path d="M6.500 642.200H23.500M6.500 644.800H23.500" stroke="#a8a8a8" stroke-width="1.200" stroke-dasharray="1.500 1"/>
<path d="M10.500 654L18.500 662M18.500 654L10.500 662" stroke="#f2f2f2" stroke-width="2.200"/>
<path d="M11.500 679.500L19.500 687" stroke="#f4f4f4" stroke-width="2.800" stroke-linecap="round"/>
<path d="M13.500 676.500Q10.500 675.500 8.800 678L11.500 680.200L10.500 682L8 681.500Q8.500 684.500 12 684Q15 682.500 14.500 679Z" fill="#f4f4f4"/>
<rect x="32" y="675.500" width="14.500" height="13" rx="2" fill="#dfe3ee" stroke="#8e98b4" stroke-width="1"/>
<path d="M35 679L39 682L35 685M40 686H44" stroke="#3a4058" stroke-width="1.300" fill="none"/>
<path d="M50 680.500H55L52.500 683.500Z" fill="#8a8a8a"/>
</svg>
<svg width="18" height="18" viewBox="1259 179 18 18" style="left:1259px;top:179px"><path d="M1264 189.500H1272L1268 185Z" fill="#111"/></svg>
<div class="a stb" style="left:182px"></div>
<div class="a stb" style="left:204px"></div>
<div class="a stb on" style="left:226px"></div>
<div class="a stb" style="left:248px"></div>
<div class="a stb on" style="left:270px"></div>
<div class="a stb on" style="left:292px"></div>
<div class="a stb" style="left:314px"></div>
<div class="a stb on" style="left:336px"></div>
<div class="a stb on" style="left:358px"></div>
<div class="a stb on" style="left:380px"></div>
<div class="a stb" style="left:402px"></div>
<div class="a stb" style="left:424px"></div>
<div class="a stb" style="left:446px"></div>
<div class="a stb" style="left:468px"></div>
<div class="a stb" style="left:490px"></div>
<div class="a" style="left:3px;top:695px;width:177px;height:21px;border-right:1px solid #6a6a6a"></div>
<div class="a stb" style="left:906.5px;width:41.5px"></div>
<div class="a stb" style="left:950px;width:21px"></div>
<div class="a stb" style="left:972px;width:21px"></div>
<div class="a stb" style="left:1007px;width:49px"></div>
<div class="a stb" style="left:1057px;width:21px"></div>
<div class="a stb" style="left:1079px;width:21px"></div>
<div class="a stb" style="left:1108px;width:21px"></div>
<div class="a stb" style="left:1130px;width:21px"></div>
<div class="a stb" style="left:1152px;width:21px"></div>
<div class="a stb" style="left:1178px;width:50px;background:linear-gradient(#8a8a8a,#a8a8a8 30%,#b4b4b4);box-shadow:inset 1px 1px 1px #555"></div>
<div class="a stb" style="left:1243px;width:17px;top:697px;height:18px"></div>
<svg width="1280" height="26" viewBox="0 694 1280 26" style="left:0;top:694px">
<defs>
<linearGradient id="gW" x1="0" y1="0" x2="0" y2="1"><stop offset="0" stop-color="#ffffff"/><stop offset="1" stop-color="#d8dade"/></linearGradient>
<pattern id="dots" width="2" height="2" patternUnits="userSpaceOnUse"><rect width="2" height="2" fill="#7cb4e4"/><rect width="1" height="1" fill="#c8e0f4"/><rect x="1" y="1" width="1" height="1" fill="#c8e0f4"/></pattern>
</defs>
<g fill="none" stroke="#1c1c1c" stroke-width="1.200">
<!-- 1 infer -->
<path d="M190.500 697.500V711M184 703.500H197" stroke-width="1.300"/><path d="M187 703.500H194" stroke-width="2.600"/>
<circle cx="198" cy="707" r="1.800" fill="#fff" stroke="#2f6cc4" stroke-width="1"/><circle cx="194.500" cy="711.500" r="1.800" fill="#fff" stroke="#2f6cc4" stroke-width="1"/><path d="M196.800 708.500L195.700 710" stroke="#2f6cc4" stroke-width="1"/>
<!-- 2 snap -->
<path d="M208.500 700.500H217M208.500 703.500H217M208.500 706.500H217" stroke="#333" stroke-width="1" stroke-dasharray="1.500 1.200"/><path d="M208.500 710H219.500" stroke-width="1.300"/><path d="M218.500 701V707.500" stroke="#333" stroke-width="1.600"/>
<!-- 3 grid -->
<rect x="228" y="697.500" width="16" height="15" fill="#fff" stroke="none"/>
<path d="M228 700.500H244M228 703.500H244M228 706.500H244M228 709.500H244M230.500 697.500V712.500M233.500 697.500V712.500M236.500 697.500V712.500M239.500 697.500V712.500M242.500 697.500V712.500" stroke="#2a2e38" stroke-width="1.300"/>
<rect x="228" y="697.500" width="16" height="15" stroke="#2a2e38" stroke-width="1.200"/>
<!-- 4 ortho -->
<path d="M250.500 698V711.500H265" stroke="#444" stroke-width="1.300"/><path d="M250.500 706H256V711.500" stroke="#444" stroke-width="1"/>
<!-- 5 polar -->
<path d="M284 707.500A4.800 4.800 0 1 1 281 702.500" stroke="#2a4a6a" stroke-width="1.300"/><path d="M277.500 707.500H287.500M279.500 707.500L286 699.500" stroke="#111" stroke-width="1.300"/>
<!-- 6 osnap -->
<rect x="296.500" y="699.500" width="12" height="12" fill="url(#gW)" stroke="#333" stroke-width="1.300"/><circle cx="295.500" cy="698.500" r="1.900" fill="#fff" stroke="#e8761a" stroke-width="1.300"/>
<!-- 7 3dosnap -->
<path d="M318.500 702.500L321.500 698.500H331.500V708L328.500 712H318.500Z" fill="url(#gW)" stroke="#444" stroke-width="1.200"/><path d="M318.500 702.500H328.500V712M328.500 702.500L331.500 698.500" stroke="#888" stroke-width=".8"/><circle cx="318" cy="711.500" r="1.900" fill="#fff" stroke="#e8761a" stroke-width="1.300"/>
<!-- 8 otrack -->
<path d="M349.500 701L341 709.500H352.500" stroke="#111" stroke-width="1.400"/>
<!-- 9 ducs -->
<path d="M361.500 697.500V712H376" stroke="#333" stroke-width="1.100"/><path d="M360 699.500L361.500 697L363 699.500ZM374 710.500L376.500 712L374 713.500Z" fill="#333" stroke="none"/><path d="M361.500 712L369 704" stroke="#333" stroke-width="1"/>
<path d="M372 697L368 702H371L369 706L374.500 701H371.500L374 697Z" fill="#f8c020" stroke="#c07808" stroke-width=".7"/>
<!-- 10 dyn -->
<path d="M383 704.500H394M388.500 699.500V710" stroke="#111" stroke-width="1.400"/><rect x="390.500" y="707" width="5.500" height="3" fill="#fff" stroke="#111" stroke-width="1.100"/>
<!-- 11 lwt -->
<path d="M405 704.500H418" stroke="#111" stroke-width="2.600"/><path d="M411.500 698V712" stroke="#111" stroke-width="1.200"/>
<!-- 12 tpy -->
<rect x="425.500" y="697.500" width="16.500" height="15" fill="url(#dots)" stroke="#3a84d8" stroke-width="1.300"/>
<!-- 13 qp -->
<rect x="451.500" y="700" width="8" height="10.500" fill="#fff" stroke="#111" stroke-width="1.600"/><path d="M453 703H458M453 705.500H458M453 708H458" stroke="#444" stroke-width=".9"/>
<!-- 14 sc -->
<path d="M470 702H477M473.500 698.500V705.500" stroke="#333" stroke-width="1.300"/><rect x="475.500" y="704.500" width="6" height="6" fill="#e8eaee" stroke="#666" stroke-width=".9"/><rect x="478" y="706.500" width="7.500" height="7" rx="1" fill="#8cc860" stroke="#3a7a28" stroke-width="1.100"/>
<!-- 15 am -->
<path d="M497.500 698.500H502.500V703H507V708H502.500V712.500H497.500V708H493V703H497.500Z" fill="#fbfbfb" stroke="#6a6a6a" stroke-width="1"/>
</g>
</svg>

<svg width="400" height="26" viewBox="900 694 400 26" style="left:900px;top:694px">
<g fill="none" stroke="#2a2a2a" stroke-width="1.100">
<!-- qv layouts -->
<rect x="955.500" y="698.500" width="11" height="9.500" fill="#f8f8f8" stroke="#2a2a2a" stroke-width="1.200"/><path d="M958.500 700.500V706H963.500Z" fill="#444" stroke="none"/><path d="M953 711.800H969" stroke="#3a3a3a" stroke-width="1.300"/>
<!-- qv drawings -->
<rect x="975.500" y="699" width="6.500" height="6" fill="#f8f8f8" stroke="#3a3a3a" stroke-width="1.100"/><rect x="983.500" y="699" width="6.500" height="6" fill="#f8f8f8" stroke="#3a3a3a" stroke-width="1.100"/>
<path d="M975 707.300H990.500" stroke="#3a3a3a" stroke-width="1"/><path d="M975 711.500H990.500" stroke="#3a3a3a" stroke-width="2.200" stroke-linecap="round"/>
<!-- anno scale -->
<path d="M1016.500 697.500L1019 705.500L1023 711L1016.500 707.500L1010 711L1014 705.500Z" fill="#f6f6f6" stroke="#4a4a4a" stroke-width="1"/>
<path d="M1044.500 702H1052L1048.200 706.500Z" fill="#111" stroke="none"/>
<!-- anno vis -->
<path d="M1066 697.500L1068.500 705.500L1072.500 711L1066 707.500L1059.500 711L1063.500 705.500Z" fill="#f6f6f6" stroke="#5a5a5a" stroke-width="1"/>
<circle cx="1072.500" cy="706.500" r="2.800" fill="#f8cc30" stroke="#c89010" stroke-width=".8"/>
<path d="M1088 697.500L1090.500 705.500L1094.500 711L1088 707.500L1081.500 711L1085.500 705.500Z" fill="#c4c4c4" stroke="#8e8e8e" stroke-width="1"/>
<path d="M1092 698L1089.500 701.500H1091.500L1090 704.500L1094 701H1092L1093.500 698Z" fill="#d8d8d8" stroke="#8a8a8a" stroke-width=".6"/>
<!-- gear -->
<path d="M1116 697.500h3.200l.5 2 1.800.8 1.800-1.100 2.200 2.200-1.100 1.800.8 1.800 2 .5v3.200l-2 .5-.8 1.800 1.100 1.800-2.200 2.200-1.800-1.100-1.800.8-.5 2h-3.200l-.5-2-1.800-.8-1.800 1.100-2.200-2.200 1.100-1.800-.8-1.800-2-.5v-3.200l2-.5.800-1.800-1.100-1.800 2.200-2.200 1.800 1.100 1.800-.8z" transform="translate(117.600 70.700) scale(.895)" fill="#f6f6f6" stroke="#2a2a2a" stroke-width="1.200"/>
<circle cx="1117.700" cy="705" r="2.700" fill="#b0b0b0" stroke="#2a2a2a" stroke-width="1.100"/>
<path d="M1124 713.500H1127V710.500Z" fill="#111" stroke="none"/>
<!-- lock -->
<path d="M1140.500 704V701.500Q1140.500 698.500 1144 698.500Q1147.500 698.500 1147.500 701.500V702.500" stroke="#2a2a2a" stroke-width="2.600"/><path d="M1140.500 704V701.500Q1140.500 698.500 1144 698.500Q1147.500 698.500 1147.500 701.500V702.500" stroke="#f6f6f6" stroke-width="1.200"/>
<rect x="1133" y="704" width="11" height="8" fill="#f6f6f6" stroke="#2a2a2a" stroke-width="1.200"/><rect x="1137.300" y="706" width="2.200" height="4" fill="#555" stroke="none"/>
<!-- orange ball -->
<circle cx="1161.200" cy="704.800" r="6.500" fill="#e87a22" stroke="#b85810" stroke-width=".8"/><ellipse cx="1159.500" cy="701.500" rx="3.500" ry="2" fill="#f8b070" stroke="none" opacity=".8"/>
<path d="M1158.500 702.500L1163 707" stroke="#f8d8b8" stroke-width="1.200"/>
<!-- tray icons -->
<path d="M1184.500 699H1195.500V708H1184.500Z" fill="#3a6cc0" stroke="#24407a" stroke-width=".9"/><path d="M1184 704.500H1191L1194 710.500H1184Z" fill="#f0d048" stroke="#a88a18" stroke-width=".8"/>
<path d="M1186.500 701.500H1190" stroke="#d8e4f4" stroke-width="1.200"/><circle cx="1187" cy="701.500" r="1.300" fill="#d8e4f4" stroke="none"/>
<path d="M1190 709.500L1193 712.500L1198.500 706" stroke="#2a9a28" stroke-width="2.200"/>
<path d="M1206.500 703Q1206.500 698 1211 698Q1215.500 698 1215.500 703Q1215.500 705.500 1213 708V710.500H1209V708Q1206.500 705.500 1206.500 703Z" fill="#faf0a4" stroke="#8a8468" stroke-width=".9"/><rect x="1209.500" y="710.500" width="3" height="2.500" fill="#c8c8c8" stroke="#5a5a64" stroke-width=".7"/>
<path d="M1232 704.500H1238.500L1235.200 709Z" fill="#111" stroke="none"/>
<!-- clean screen -->
<rect x="1244.500" y="699" width="13" height="12.500" fill="#f4f4f4" stroke="#2e2e2e" stroke-width="1.200"/><rect x="1244.500" y="699" width="13" height="2.800" fill="#3a3a3a" stroke="none"/>
<!-- grip -->
<g fill="#c8c8c8" stroke="none"><rect x="1274" y="705" width="2" height="2"/><rect x="1270" y="709" width="2" height="2"/><rect x="1274" y="709" width="2" height="2"/><rect x="1266" y="713" width="2" height="2"/><rect x="1270" y="713" width="2" height="2"/><rect x="1274" y="713" width="2" height="2"/></g>
</g>
</svg>

<div class="a tx" style="left:263.0px;top:5.3px;font-size:12px;letter-spacing:-0.45px;color:#9a9a9a">Drafting &amp; Annotation</div>
<div class="a tx" style="left:453.0px;top:5.3px;font-size:12px;letter-spacing:0.06px;color:#ececec;font-weight:bold">Z:\Projects\AutoCAD\---_Site Plan i...\15_Begin.dwg</div>
<div class="a tx" style="left:784.0px;top:6.3px;font-size:12px;letter-spacing:-0.30px;color:#8c8c8c;font-style:italic;transform:scaleX(0.962);transform-origin:0 0">Type a keyword or phrase</div>
<div class="a tx" style="left:1008.0px;top:6.0px;font-size:11.5px;letter-spacing:-0.30px;color:#dcdcdc;transform:scaleX(0.970);transform-origin:0 0">Sign In</div>
<div class="a tx" style="left:57.0px;top:29.0px;font-size:11.5px;letter-spacing:-0.30px;color:#3a3a3a;transform:scaleX(0.940);transform-origin:0 0">Home</div>
<div class="a tx" style="left:104.0px;top:29.0px;font-size:11.5px;letter-spacing:0.45px;color:#e6e6e6">Insert</div>
<div class="a tx" style="left:154.0px;top:29.0px;font-size:11.5px;letter-spacing:-0.15px;color:#e6e6e6">Annotate</div>
<div class="a tx" style="left:218.0px;top:29.0px;font-size:11.5px;letter-spacing:-0.11px;color:#e6e6e6">Layout</div>
<div class="a tx" style="left:271.0px;top:29.0px;font-size:11.5px;letter-spacing:-0.40px;color:#e6e6e6">Parametric</div>
<div class="a tx" style="left:343.0px;top:29.0px;font-size:11.5px;letter-spacing:-0.30px;color:#e6e6e6;transform:scaleX(0.924);transform-origin:0 0">View</div>
<div class="a tx" style="left:384.0px;top:29.0px;font-size:11.5px;letter-spacing:-0.30px;color:#e6e6e6;transform:scaleX(0.973);transform-origin:0 0">Manage</div>
<div class="a tx" style="left:443.0px;top:29.0px;font-size:11.5px;letter-spacing:-0.11px;color:#e6e6e6">Output</div>
<div class="a tx" style="left:496.0px;top:29.0px;font-size:11.5px;letter-spacing:-0.30px;color:#e6e6e6;transform:scaleX(0.963);transform-origin:0 0">Plug-ins</div>
<div class="a tx" style="left:554.0px;top:29.0px;font-size:11.5px;letter-spacing:-0.39px;color:#e6e6e6">Autodesk 360</div>
<div class="a tx" style="left:640.0px;top:29.0px;font-size:11.5px;letter-spacing:-0.34px;color:#e6e6e6">Raster Tools</div>
<div class="a tx" style="left:720.0px;top:29.0px;font-size:11.5px;letter-spacing:-0.30px;color:#e6e6e6;transform:scaleX(0.951);transform-origin:0 0">SketchBook Designer</div>
<div class="a tx" style="left:839.0px;top:29.0px;font-size:11.5px;letter-spacing:-0.23px;color:#e6e6e6">Featured Apps</div>
<div class="a tx" style="left:931.0px;top:29.0px;font-size:11.5px;letter-spacing:-0.45px;color:#e6e6e6">Express Tools</div>
<div class="a tx" style="left:16.0px;top:89.0px;font-size:11.5px;letter-spacing:-0.30px;color:#474747;transform:scaleX(0.911);transform-origin:0 0">Line</div>
<div class="a tx" style="left:48.0px;top:89.0px;font-size:11.5px;letter-spacing:-0.30px;color:#474747;transform:scaleX(0.930);transform-origin:0 0">Polyline</div>
<div class="a tx" style="left:98.5px;top:89.0px;font-size:11.5px;letter-spacing:-0.30px;color:#474747;transform:scaleX(0.896);transform-origin:0 0">Circle</div>
<div class="a tx" style="left:146.5px;top:89.0px;font-size:11.5px;letter-spacing:-0.30px;color:#474747;transform:scaleX(0.931);transform-origin:0 0">Arc</div>
<div class="a tx" style="left:91.0px;top:127.0px;font-size:11.5px;letter-spacing:-0.30px;color:#474747;transform:scaleX(0.937);transform-origin:0 0">Draw</div>
<div class="a tx" style="left:244.7px;top:56.5px;font-size:11.5px;letter-spacing:-0.30px;color:#474747;transform:scaleX(0.966);transform-origin:0 0">Move</div>
<div class="a tx" style="left:244.7px;top:81.0px;font-size:11.5px;letter-spacing:-0.30px;color:#474747;transform:scaleX(0.975);transform-origin:0 0">Copy</div>
<div class="a tx" style="left:244.7px;top:105.0px;font-size:11.5px;letter-spacing:-0.19px;color:#474747">Stretch</div>
<div class="a tx" style="left:314.6px;top:56.5px;font-size:11.5px;letter-spacing:-0.14px;color:#474747">Rotate</div>
<div class="a tx" style="left:314.6px;top:81.0px;font-size:11.5px;letter-spacing:-0.43px;color:#474747">Mirror</div>
<div class="a tx" style="left:314.6px;top:105.0px;font-size:11.5px;letter-spacing:-0.30px;color:#474747;transform:scaleX(0.921);transform-origin:0 0">Scale</div>
<div class="a tx" style="left:384.0px;top:56.5px;font-size:11.5px;letter-spacing:-0.30px;color:#474747;transform:scaleX(0.923);transform-origin:0 0">Trim</div>
<div class="a tx" style="left:384.0px;top:81.0px;font-size:11.5px;letter-spacing:-0.30px;color:#474747;transform:scaleX(0.966);transform-origin:0 0">Fillet</div>
<div class="a tx" style="left:384.0px;top:105.0px;font-size:11.5px;letter-spacing:-0.37px;color:#474747">Array</div>
<div class="a tx" style="left:315.6px;top:127.0px;font-size:11.5px;letter-spacing:-0.34px;color:#474747">Modify</div>
<div class="a tx" style="left:467.7px;top:80.0px;font-size:11.5px;letter-spacing:-0.36px;color:#3a3a3a">Unsaved Layer State</div>
<div class="a tx" style="left:547.8px;top:104.0px;font-size:11.5px;letter-spacing:0.32px;color:#3a3a3a">text</div>
<div class="a tx" style="left:545.8px;top:127.0px;font-size:11.5px;letter-spacing:-0.30px;color:#474747;transform:scaleX(0.975);transform-origin:0 0">Layers</div>
<div class="a tx" style="left:690.5px;top:89.0px;font-size:11.5px;letter-spacing:0.14px;color:#474747">Text</div>
<div class="a tx" style="left:749.7px;top:105.0px;font-size:11.5px;letter-spacing:-0.30px;color:#474747;transform:scaleX(0.943);transform-origin:0 0">Table</div>
<div class="a tx" style="left:696.4px;top:127.0px;font-size:11.5px;letter-spacing:-0.32px;color:#474747">Annotation</div>
<div class="a tx" style="left:790.0px;top:89.0px;font-size:11.5px;letter-spacing:0.01px;color:#474747">Insert</div>
<div class="a tx" style="left:803.8px;top:127.0px;font-size:11.5px;letter-spacing:-0.30px;color:#474747;transform:scaleX(0.891);transform-origin:0 0">Block</div>
<div class="a tx" style="left:906.0px;top:56.5px;font-size:11.5px;letter-spacing:-0.30px;color:#3a3a3a;transform:scaleX(0.941);transform-origin:0 0">ByLayer</div>
<div class="a tx" style="left:954.6px;top:81.0px;font-size:11.5px;letter-spacing:-0.30px;color:#3a3a3a;transform:scaleX(0.943);transform-origin:0 0">ByLayer</div>
<div class="a tx" style="left:954.6px;top:105.0px;font-size:11.5px;letter-spacing:-0.30px;color:#3a3a3a;transform:scaleX(0.943);transform-origin:0 0">ByLayer</div>
<div class="a tx" style="left:905.8px;top:127.0px;font-size:11.5px;letter-spacing:-0.40px;color:#474747">Properties</div>
<div class="a tx" style="left:1031.8px;top:89.0px;font-size:11.5px;letter-spacing:-0.30px;color:#474747;transform:scaleX(0.949);transform-origin:0 0">Group</div>
<div class="a tx" style="left:1033.7px;top:127.0px;font-size:11.5px;letter-spacing:-0.30px;color:#474747;transform:scaleX(0.944);transform-origin:0 0">Groups</div>
<div class="a tx" style="left:1105.5px;top:89.0px;font-size:11.5px;letter-spacing:-0.30px;color:#474747;transform:scaleX(0.962);transform-origin:0 0">Measure</div>
<div class="a tx" style="left:1114.7px;top:127.0px;font-size:11.5px;letter-spacing:-0.35px;color:#474747">Utilities</div>
<div class="a tx" style="left:1198.9px;top:89.0px;font-size:11.5px;letter-spacing:-0.30px;color:#474747;transform:scaleX(0.957);transform-origin:0 0">Paste</div>
<div class="a tx" style="left:1203.0px;top:127.0px;font-size:11.5px;letter-spacing:-0.30px;color:#474747;transform:scaleX(0.954);transform-origin:0 0">Clipboard</div>
<div class="a tx" style="left:36.0px;top:154.0px;font-size:11.5px;letter-spacing:-0.38px;color:#1e1e1e">15_Begin*</div>
<div class="a tx" style="left:78.0px;top:614.7px;font-size:11.5px;letter-spacing:-0.30px;color:#f4f4f4;transform:scaleX(0.929);transform-origin:0 0">Model</div>
<div class="a tx" style="left:123.7px;top:614.7px;font-size:11.5px;letter-spacing:-0.30px;color:#2a2a2a;transform:scaleX(0.927);transform-origin:0 0">Layout1</div>
<div class="a tx" style="left:178.7px;top:614.7px;font-size:11.5px;letter-spacing:-0.30px;color:#2a2a2a;transform:scaleX(0.953);transform-origin:0 0">Layout2</div>
<div class="a tx" style="left:28.8px;top:638.9px;font-size:11.67px;letter-spacing:-0.01px;color:#1a1a1a;font-family:'Liberation Mono',monospace;-webkit-text-stroke:.3px #1a1a1a">Specify point on side to offset or [Exit/Multiple/Undo] &lt;Exit&gt;:</div>
<div class="a tx" style="left:28.8px;top:653.6px;font-size:11.67px;letter-spacing:-0.01px;color:#1a1a1a;font-family:'Liberation Mono',monospace;-webkit-text-stroke:.3px #1a1a1a">Select object to offset or [Exit/Undo] &lt;Exit&gt;: *Cancel*</div>
<div class="a tx" style="left:63.8px;top:674.9px;font-size:11.67px;letter-spacing:-0.13px;color:#a0a0a0;font-style:italic;font-family:'Liberation Mono',monospace">Type a command</div>
<div class="a tx" style="left:16.0px;top:698.5px;font-size:11.5px;letter-spacing:-0.13px;color:#1c1c1c">4.3783E+03,  59'-1 3/8"  , 0'-0"</div>
<div class="a tx" style="left:909.0px;top:697.5px;font-size:11.5px;letter-spacing:-0.30px;color:#333;transform:scaleX(0.919);transform-origin:0 0">MODEL</div>
<div class="a tx" style="left:1027.4px;top:697.5px;font-size:11.5px;letter-spacing:-0.30px;color:#333;transform:scaleX(0.838);transform-origin:0 0">1:1</div>
</div>
</body>
</html>
